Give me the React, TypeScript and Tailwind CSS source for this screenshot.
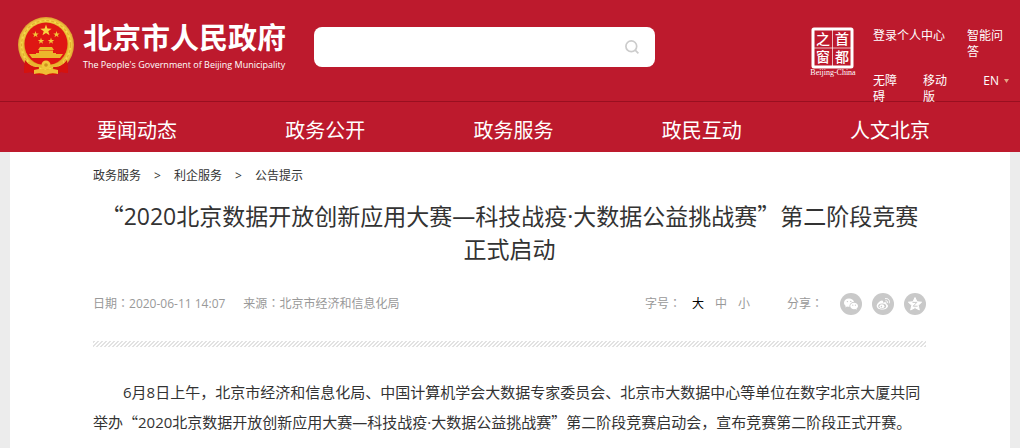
import React, { useState } from 'react';

type FontSize = '大' | '中' | '小';

const navItems = ['要闻动态', '政务公开', '政务服务', '政民互动', '人文北京'];
const crumbs = ['政务服务', '利企服务', '公告提示'];
const sizes: FontSize[] = ['大', '中', '小'];

// five-pointed star centred on cx, cy
const star = (cx: number, cy: number, r: number) =>
  Array.from({ length: 10 }, (_, i) => {
    const a = (Math.PI / 5) * i - Math.PI / 2;
    const d = i % 2 ? r * 0.4 : r;
    return `${(cx + d * Math.cos(a)).toFixed(2)},${(cy + d * Math.sin(a)).toFixed(2)}`;
  }).join(' ');

function Emblem() {
  return (
    <svg width="58" height="60" viewBox="0 0 58 60" className="shrink-0" aria-hidden="true">
      <defs>
        <radialGradient id="gold" cx="50%" cy="50%" r="50%">
          <stop offset="0.74" stopColor="#d9981c" />
          <stop offset="0.87" stopColor="#f8dc4c" />
          <stop offset="1" stopColor="#dc9a2c" />
        </radialGradient>
      </defs>
      <path d="M8 42 L7 57 L14 56 L20 59 H38 L44 56 L51 57 L50 42 Z" fill="#d5120f" />
      <circle cx="29" cy="29" r="28" fill="url(#gold)" />
      <circle cx="29" cy="29" r="24.5" fill="none" stroke="#e3ae2c" strokeWidth="1.2" strokeDasharray="3 2" />
      <circle cx="29" cy="28" r="21.5" fill="#df1713" />
      <polygon points={star(29, 14.5, 6)} fill="#f8d440" />
      <polygon points={star(18.5, 18.5, 3.4)} fill="#f2c638" />
      <polygon points={star(39.5, 18.5, 3.4)} fill="#f2c638" />
      <polygon points={star(24, 25, 3.4)} fill="#f2c638" />
      <polygon points={star(34, 25, 3.4)} fill="#f2c638" />
      <path d="M23 31 H35 L37 34 H21 Z M22 34.5 H36 V37 H22 Z M19 37 H39 V41 H19 Z M12 38 H46 L43 42 H15 Z" fill="#ecb62c" />
      <path d="M15 43 H43 L38 45.5 H20 Z" fill="#df1713" />
      <path d="M8 44 Q14 52 22 51 L21 59 L14 56 L7 57 Z M50 44 Q44 52 36 51 L37 59 L44 56 L51 57 Z" fill="#d5120f" />
      <path d="M12 46 Q20 51 29 50 Q38 51 46 46" fill="none" stroke="#eab430" strokeWidth="3" />
      <circle cx="29" cy="49" r="4.5" fill="#f2c53a" />
      <circle cx="29" cy="49" r="1.8" fill="#d0901c" />
      <path d="M17 54 Q24 52 29 54 Q34 52 41 54 V58 Q34 56 29 59 Q24 56 17 58 Z" fill="#efbd34" />
    </svg>
  );
}

function CapitalSeal() {
  return (
    <svg width="48" height="50" viewBox="0 0 48 50" className="shrink-0" role="img" aria-label="首都之窗">
      <rect x="4" y="2" width="39" height="38" rx="1" fill="none" stroke="#fff" strokeWidth="3" />
      <path d="M23.5 2 V40 M4 21 H43" stroke="#fff" strokeOpacity="0.7" strokeWidth="1" />
      <g fill="#fff" fontFamily="'Noto Sans CJK SC', sans-serif" fontSize="14" fontWeight="500" textAnchor="middle">
        <text x="14" y="17">之</text>
        <text x="33" y="17">首</text>
        <text x="14" y="35">窗</text>
        <text x="33" y="35">都</text>
      </g>
      <text x="24" y="48" fill="#fff" fontFamily="'Liberation Serif', serif" fontSize="8" textAnchor="middle">
        Beijing-China
      </text>
    </svg>
  );
}

function WechatIcon() {
  return (
    <svg width="22" height="22" viewBox="0 0 22 22" aria-hidden="true">
      <circle cx="11" cy="11" r="11" fill="#c9c9c9" />
      <path d="M9 5.5 C6 5.5 4 7.4 4 9.7 C4 11 4.7 12.1 5.7 12.9 L5.3 14.4 L7 13.5 C7.7 13.8 8.8 13.9 9.5 13.8 C9.2 10.8 11.7 8.9 14 9 C13.6 7 11.5 5.5 9 5.5 Z" fill="#fff" />
      <path d="M14 9.7 C11.7 9.7 10.2 11.2 10.2 13 C10.2 15 12 16.2 14 16.2 L15.3 16 L16.8 16.8 L16.5 15.5 C17.5 14.8 18 14 18 13 C18 11.2 16.3 9.7 14 9.7 Z" fill="#fff" />
      <g fill="#c9c9c9">
        <circle cx="7.4" cy="8.6" r="0.7" />
        <circle cx="10.8" cy="8.4" r="0.7" />
        <circle cx="12.8" cy="12.2" r="0.6" />
        <circle cx="15.4" cy="12.2" r="0.6" />
      </g>
    </svg>
  );
}

function WeiboIcon() {
  return (
    <svg width="22" height="22" viewBox="0 0 22 22" aria-hidden="true">
      <circle cx="11" cy="11" r="11" fill="#c9c9c9" />
      <path d="M10 7.5 C8.3 7.2 4.6 10.7 4.7 13 C4.8 15.4 7.5 16.7 10.4 16.6 C13.4 16.5 16 14.8 16 12.9 C16 11.8 15.2 11.3 14.4 11 C14.8 9.5 13.8 8.8 11 9.8 C11.4 8.6 11.1 7.7 10 7.5 Z" fill="#fff" />
      <ellipse cx="10.2" cy="13.1" rx="4" ry="2.6" fill="#c9c9c9" />
      <ellipse cx="9.9" cy="13.2" rx="2.5" ry="2" fill="#fff" />
      <circle cx="9.4" cy="13.6" r="0.8" fill="#c9c9c9" />
      <path d="M13.4 5.6 C16.2 5 18.2 7.2 17.3 10 M13.8 7.8 C15.2 7.6 15.8 8.4 15.4 9.6" fill="none" stroke="#fff" strokeWidth="1" strokeLinecap="round" />
    </svg>
  );
}

function QzoneIcon() {
  return (
    <svg width="22" height="22" viewBox="0 0 22 22" aria-hidden="true">
      <circle cx="11" cy="11" r="11" fill="#c9c9c9" />
      <path d="M11 4.5 L13 8.8 L17.6 9.2 L14.2 12.3 L15.3 17 L11 14.6 L6.7 17 L7.8 12.3 L4.4 9.2 L9 8.8 Z" fill="#fff" stroke="#fff" strokeLinejoin="round" />
      <path d="M8.5 9.4 H12.8 L9.2 13.2 H13.6" fill="none" stroke="#c9c9c9" strokeWidth="1" />
    </svg>
  );
}

// quotation marks take a full character cell in Chinese text
function Quoted({ children }: { children: React.ReactNode }) {
  return (
    <>
      <span className="font-['Noto_Sans_CJK_SC',sans-serif] leading-none">“</span>
      {children}
      <span className="font-['Noto_Sans_CJK_SC',sans-serif] leading-none">”</span>
    </>
  );
}

function Colon() {
  return <span lang="zh-TW" className="font-['Noto_Sans_CJK_TC',sans-serif] leading-none">：</span>;
}

export default function App() {
  const [keyword, setKeyword] = useState('');
  const [size, setSize] = useState<FontSize>('大');

  return (
    <div lang="zh-CN" className="min-h-screen bg-[#ececec] font-['Open_Sans','Noto_Sans_CJK_SC',sans-serif] text-[#333]">
      <header className="bg-[#bd1a2d] text-white">
        <div className="flex h-[102px] items-start border-b border-[#990f20]">
          <a href="#" className="flex shrink-0 items-start pt-4 pl-[17px]">
            <Emblem />
            <span className="flex w-[212px] flex-col gap-px pt-1 pl-2 whitespace-nowrap">
              <span className="text-[29px] leading-9 font-bold">北京市人民政府</span>
              <span className="text-[9px] leading-4 font-medium">The People's Government of Beijing Municipality</span>
            </span>
          </a>

          <form className="mt-[27px] ml-[27px] flex h-10 w-[341px] items-center rounded-lg bg-white pr-4" onSubmit={(e) => e.preventDefault()}>
            <input
              type="text"
              aria-label="搜索"
              className="h-full min-w-0 flex-1 px-4 text-sm text-[#333] outline-none"
              value={keyword}
              onChange={(e) => setKeyword(e.target.value)}
            />
            <button type="submit" aria-label="搜索">
              <svg width="14" height="14" viewBox="0 0 14 14" fill="none" stroke="#ccc" strokeWidth="1.7">
                <circle cx="6.3" cy="6.3" r="5.4" />
                <path d="M10.2 10.2 L13.4 13.4" />
              </svg>
            </button>
          </form>

          <div className="ml-auto flex shrink-0 pt-[27px] pr-[11px]">
            <CapitalSeal />
            <div className="ml-4 w-[136px] pt-px text-xs leading-4">
              <div className="flex h-[45px] justify-between">
                <a href="#" className="whitespace-nowrap">登录个人中心</a>
                <a href="#" className="w-[42px]">智能问答</a>
              </div>
              <div className="flex">
                <a href="#" className="w-[26px]">无障碍</a>
                <a href="#" className="ml-6 w-[26px]">移动版</a>
                <a href="#" className="ml-auto flex gap-[5px]">
                  EN
                  <svg width="5" height="4" viewBox="0 0 5 4" className="mt-1.5" fill="#e3a583" aria-hidden="true">
                    <path d="M0 0 H5 L2.5 4 Z" />
                  </svg>
                </a>
              </div>
            </div>
          </div>
        </div>

        <nav className="grid h-[50px] grid-cols-5 items-center pt-2 pr-9 pl-[43px] text-center text-xl">
          {navItems.map((item) => (
            <a key={item} href="#">{item}</a>
          ))}
        </nav>
      </header>

      <main className="mx-[10px] bg-white pr-[84px] pb-6 pl-[83px]">
        <div className="flex pt-4 text-xs leading-4">
          {crumbs.map((crumb, i) => (
            <React.Fragment key={crumb}>
              {i > 0 && <span className="w-[33px] text-center">&gt;</span>}
              <a href="#">{crumb}</a>
            </React.Fragment>
          ))}
        </div>

        <h1 className="pt-4 text-center text-[23px] leading-[33px]">
          <Quoted>2020北京数据开放创新应用大赛—科技战疫·大数据公益挑战赛</Quoted>第二阶段竞赛正式启动
        </h1>

        <div className="flex h-[75px] items-center text-xs leading-4 text-[#999]">
          <span>日期<Colon />2020-06-11 14:07</span>
          <span className="ml-[18px]">来源<Colon />北京市经济和信息化局</span>
          <div className="ml-auto flex">
            <span className="mr-[11px]">字号<Colon /></span>
            {sizes.map((s) => (
              <button key={s} className={`mr-[11px] ${size === s ? 'text-black' : 'text-[#999]'}`} onClick={() => setSize(s)}>
                {s}
              </button>
            ))}
          </div>
          <span className="ml-[26px]">分享<Colon /></span>
          <div className="ml-[17px] flex gap-2.5">
            <a href="#" aria-label="微信"><WechatIcon /></a>
            <a href="#" aria-label="微博"><WeiboIcon /></a>
            <a href="#" aria-label="QQ空间"><QzoneIcon /></a>
          </div>
        </div>

        <div className="h-1.5 bg-[linear-gradient(135deg,#e2e2e2_25%,#fff_25%_50%,#e2e2e2_50%_75%,#fff_75%)] bg-[length:4px_4px]" />

        <p className="pt-[30px] indent-[30px] text-[15px] leading-[30px]">
          6月8日上午，北京市经济和信息化局、中国计算机学会大数据专家委员会、北京市大数据中心等单位在数字北京大厦共同举办<Quoted>2020北京数据开放创新应用大赛—科技战疫·大数据公益挑战赛</Quoted>第二阶段竞赛启动会，宣布竞赛第二阶段正式开赛。
        </p>
      </main>
    </div>
  );
}
